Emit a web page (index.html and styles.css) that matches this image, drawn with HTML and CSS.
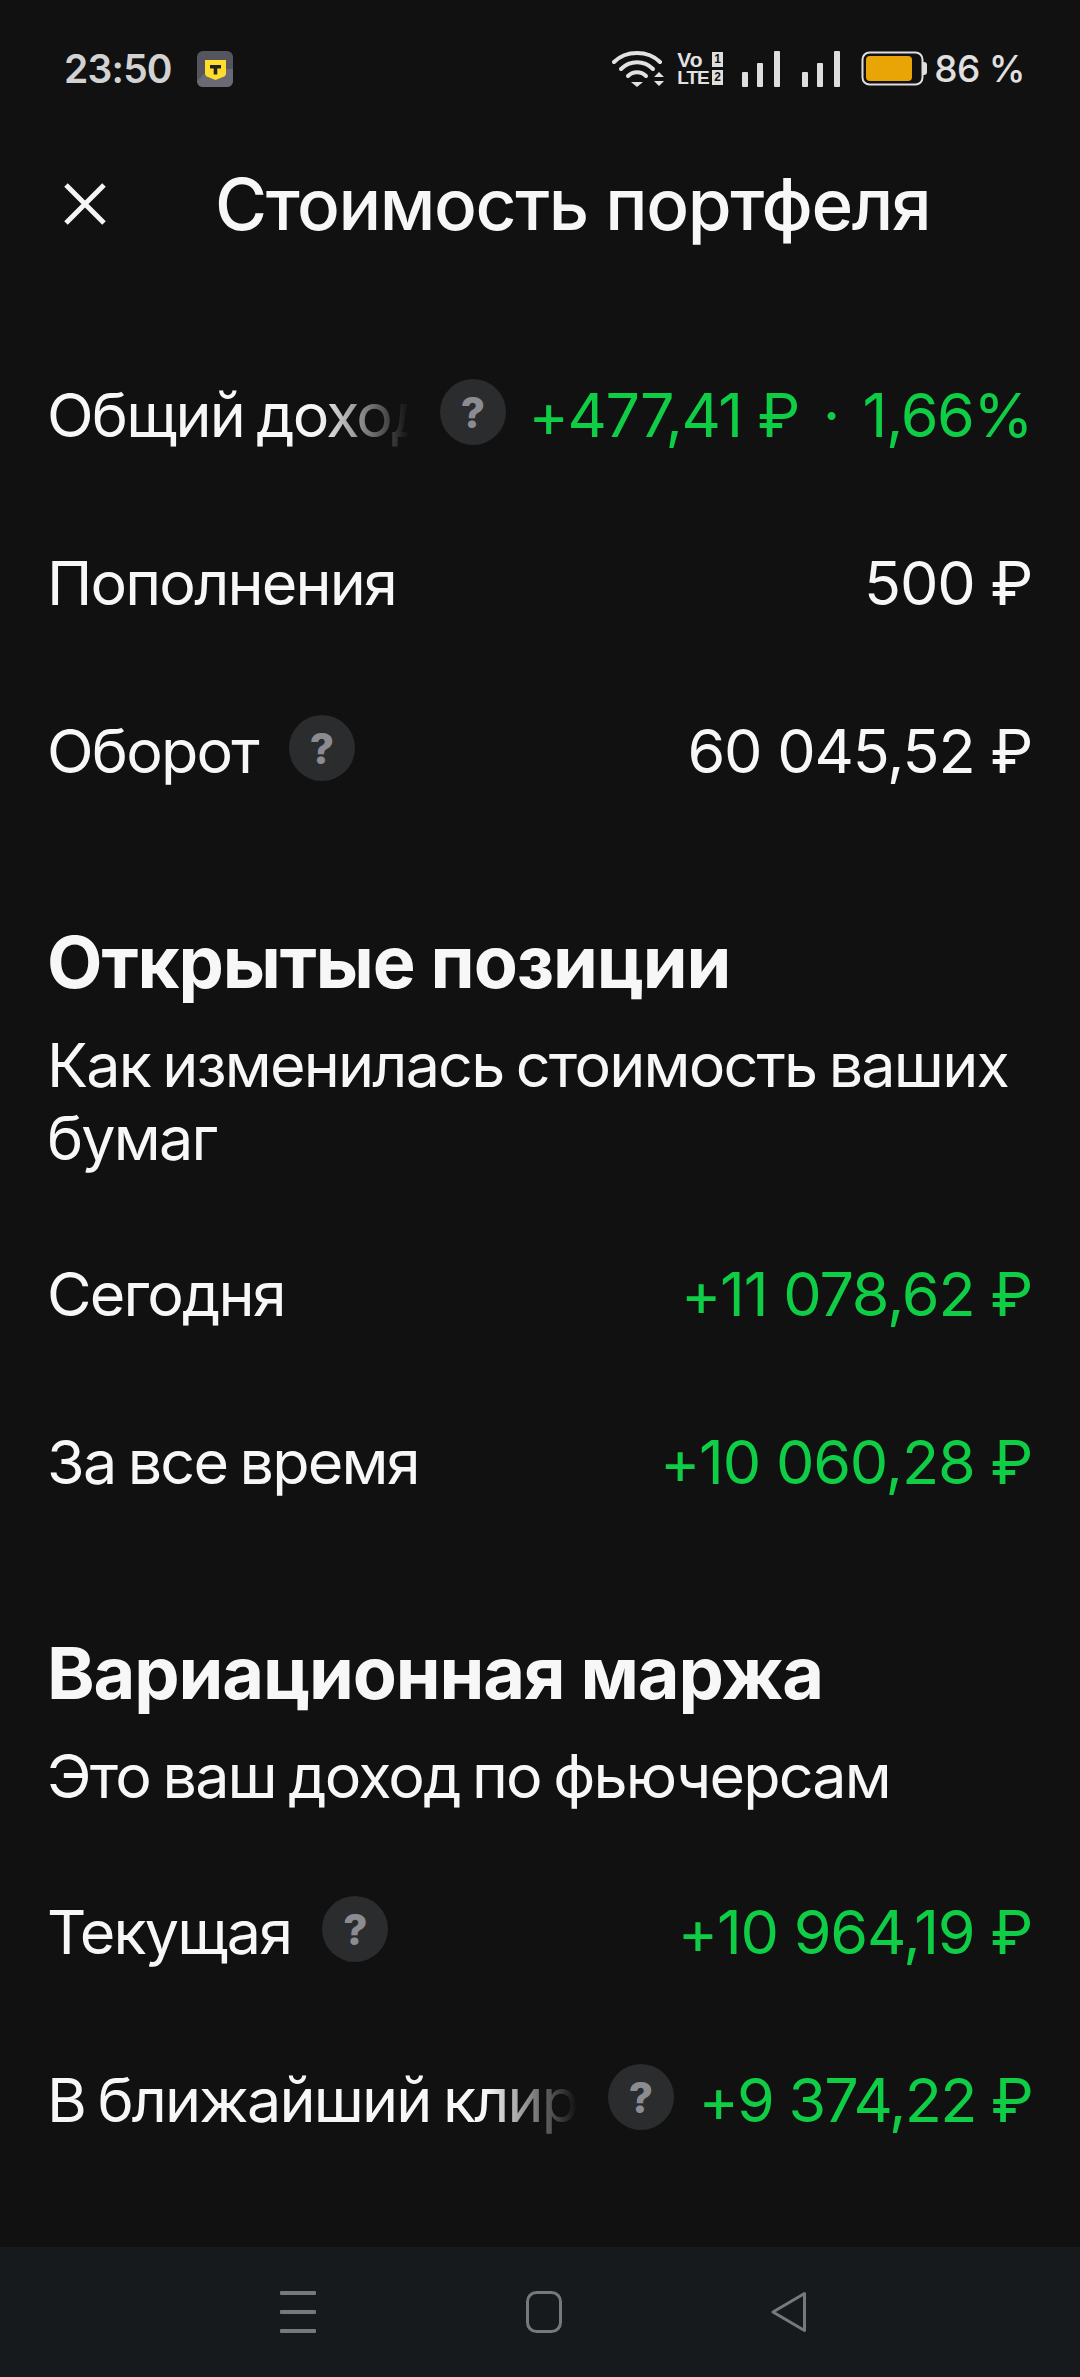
FILE: index.html
```html
<!DOCTYPE html>
<html lang="ru">
<head>
<meta charset="utf-8">
<title>Стоимость портфеля</title>
<link rel="stylesheet" href="styles.css">
</head>
<body>
<div class="screen">
  <div class="status">
    <div class="status-left">
      <span class="time">23:50</span>
      <svg class="app-icon" width="36" height="36" viewBox="0 0 36 36"><rect width="36" height="36" rx="6" fill="#55555f"/><path d="M0 30 L12 18 L36 18 L36 30 A6 6 0 0 1 30 36 L6 36 A6 6 0 0 1 0 30Z" fill="#6a6a74"/><path d="M8 9h21v13q0 3-3 4l-7.500 3-7.500-3q-3-1-3-4z" fill="#ffdd2d"/><path d="M13 14h11v3.400h-3.700v6h-3.600v-6H13z" fill="#222"/></svg>
    </div>
    <div class="status-right">
      <svg width="52" height="38" viewBox="0 0 52 38" fill="none" stroke="#e2e2e2" stroke-width="4" stroke-linecap="round"><path d="M2 12C14 0 36 0 48 12"/><path d="M9 19C18 10 32 10 41 19"/><path d="M16 26C21 21 29 21 34 26"/><path d="M19 32h12l-6 5z" fill="#e2e2e2" stroke="none"/><path d="M42 27l5-5 5 5zM42 31l5 5 5-5z" fill="#e2e2e2" stroke="none"/></svg>
      <div class="volte">
        <div class="volte-line"><span>Vo</span><b class="sim">1</b></div>
        <div class="volte-line"><span class="lte">LTE</span><b class="sim">2</b></div>
      </div>
      <svg class="signal" width="38" height="36" viewBox="0 0 38 36" fill="#dedede"><rect x="0" y="21" width="6" height="15" rx="1"/><rect x="15" y="12" width="6" height="24" rx="1"/><rect x="32" y="0" width="6" height="36" rx="1"/></svg>
      <svg class="signal second" width="38" height="36" viewBox="0 0 38 36" fill="#dedede"><rect x="0" y="21" width="6" height="15" rx="1"/><rect x="15" y="12" width="6" height="24" rx="1"/><rect x="32" y="0" width="6" height="36" rx="1"/></svg>
      <svg class="battery" width="66" height="35" viewBox="0 0 66 35"><rect x="1.500" y="1.500" width="60" height="32" rx="7" fill="none" stroke="#dedede" stroke-width="2"/><rect x="5" y="5" width="46" height="25" rx="4" fill="#e8a505"/><path d="M62 11h1q3 0 3 3v7q0 3-3 3h-1z" fill="#dedede"/></svg>
      <span class="pct">86 %</span>
    </div>
  </div>

  <header class="topbar">
    <svg class="close" width="42" height="42" viewBox="0 0 42 42" stroke="#f5f5f6" stroke-width="5"><path d="M2 2L40 40M40 2L2 40"/></svg>
    <h1 class="title">Стоимость портфеля</h1>
  </header>

  <section class="group first">
    <div class="row"><div class="label-wrap narrow-a"><span class="label fade">Общий доход</span></div><span class="help">?</span><span class="value green tight-a">+477,41 ₽<span class="sep"> · </span>1,66%</span></div>
    <div class="row"><span class="label">Пополнения</span><span class="value">500 ₽</span></div>
    <div class="row"><span class="label">Оборот</span><span class="help">?</span><span class="value">60 045,52 ₽</span></div>
  </section>

  <section class="group">
    <h2 class="heading">Открытые позиции</h2>
    <p class="desc">Как изменилась стоимость ваших бумаг</p>
    <div class="row after-desc"><span class="label">Сегодня</span><span class="value green">+11 078,62 ₽</span></div>
    <div class="row"><span class="label">За все время</span><span class="value green">+10 060,28 ₽</span></div>
  </section>

  <section class="group">
    <h2 class="heading">Вариационная маржа</h2>
    <p class="desc">Это ваш доход по фьючерсам</p>
    <div class="row after-desc"><span class="label">Текущая</span><span class="help">?</span><span class="value green">+10 964,19 ₽</span></div>
    <div class="row"><div class="label-wrap narrow-b"><span class="label fade">В ближайший клиринг</span></div><span class="help">?</span><span class="value green tight-b">+9 374,22 ₽</span></div>
  </section>

  <nav class="navbar">
    <svg width="36" height="42" viewBox="0 0 36 42" fill="#77787b"><rect x="0" y="0" width="36" height="4" rx="1"/><rect x="0" y="19" width="36" height="4" rx="1"/><rect x="0" y="38" width="36" height="4" rx="1"/></svg>
    <svg width="36" height="42" viewBox="0 0 36 42" fill="none" stroke="#77787b" stroke-width="3"><rect x="1.500" y="1.500" width="33" height="39" rx="9"/></svg>
    <svg width="36" height="42" viewBox="0 0 36 42" fill="none" stroke="#77787b" stroke-width="3" stroke-linejoin="round"><path d="M33.500 2.500L2 21L33.500 39.500z"/></svg>
  </nav>
</div>
</body>
</html>
```

FILE: styles.css
```css
* { box-sizing: border-box; }
html, body { margin: 0; padding: 0; }
body { background: #111112; font-family: Inter, "Noto Sans", sans-serif; }
.screen { width: 1080px; height: 2377px; display: flex; flex-direction: column; background: #111112; overflow: hidden; }

.status { height: 137px; flex: none; display: flex; justify-content: space-between; align-items: center; padding: 0 55px 0 64px; }
.status-left { display: flex; align-items: center; gap: 25px; }
.time { font-size: 39px; font-weight: 600; color: #d2d2d2; letter-spacing: -0.8px; }
.app-icon { display: block; }
.status-right { display: flex; align-items: center; }
.volte { display: flex; flex-direction: column; width: 46px; margin-left: 13px; font: 700 21px/18px "Liberation Sans", sans-serif; color: #e2e2e2; }
.volte-line { display: flex; justify-content: space-between; align-items: center; }
.lte { font-size: 19px; letter-spacing: -1px; }
.sim { display: inline-block; width: 11px; height: 15px; background: #dedede; color: #111112; font-size: 12px; line-height: 15px; text-align: center; }
.signal { margin-left: 19px; }
.signal.second { margin-left: 22px; }
.battery { margin-left: 21px; }
.pct { font-size: 37px; font-weight: 500; color: #e0e0e0; margin-left: 7px; letter-spacing: -0.6px; }

.topbar { height: 134px; flex: none; display: flex; align-items: center; padding-left: 64px; }
.close { flex: none; }
.title { margin: 0 0 0 109px; font-size: 71px; font-weight: 500; line-height: 80px; color: #f7f7f8; letter-spacing: -1.4px; white-space: nowrap; }

.group { display: flex; flex-direction: column; padding: 0 48px 0 47px; }
.group.first { margin-top: 60px; }
.group + .group { margin-top: 87px; }
.row { height: 168px; display: flex; align-items: center; flex: none; }
.row.after-desc { margin-top: 35px; }
.label { font-size: 61px; line-height: 74px; color: #f7f7f8; letter-spacing: -1.8px; word-spacing: -3px; white-space: nowrap; }
.label-wrap { overflow: hidden; flex: none; }
.narrow-a { width: 362px; }
.narrow-b { width: 530px; }
.fade { display: block; -webkit-mask-image: linear-gradient(to right, #000 calc(100% - 90px), transparent 100%); mask-image: linear-gradient(to right, #000 calc(100% - 90px), transparent 100%); }
.help { flex: none; width: 66px; height: 66px; margin: -6px 0 0 31px; border-radius: 50%; background: #2b2c2e; color: #8b8c92; font-size: 42px; font-weight: 800; display: flex; align-items: center; justify-content: center; }
.value { margin-left: auto; font-size: 61px; line-height: 74px; color: #f7f7f8; letter-spacing: -1.2px; white-space: nowrap; }
.tight-a { letter-spacing: -1.4px; }
.tight-b { letter-spacing: -1.8px; }
.sep { margin: 0 8px; }
.green { color: #0fce46; }

.heading { margin: 0; font-size: 72px; font-weight: 700; line-height: 80px; color: #f7f7f8; letter-spacing: -1.1px; }
.desc { margin: 27px 0 0; font-size: 61px; line-height: 73px; color: #f7f7f8; letter-spacing: -1.8px; word-spacing: -3px; }

.navbar { margin-top: auto; height: 130px; flex: none; display: flex; align-items: center; justify-content: space-between; padding: 0 273px 0 280px; background: #171a1d; }
```
